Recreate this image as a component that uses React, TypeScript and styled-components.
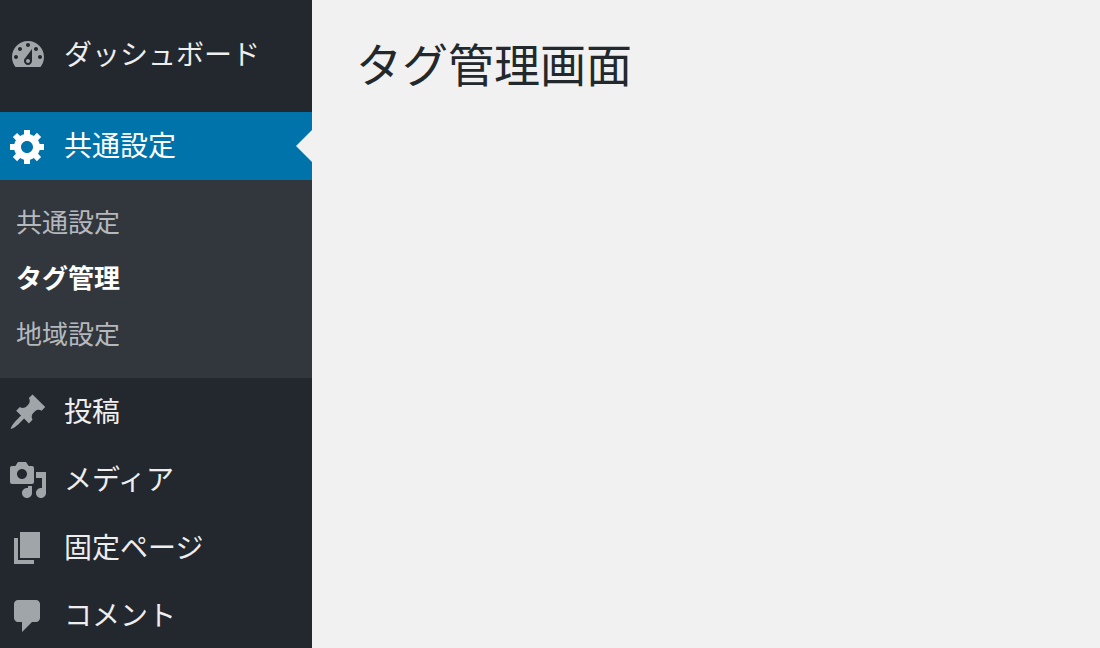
import styled, { createGlobalStyle } from "styled-components";

const GlobalStyle = createGlobalStyle`
  html, body {
    margin: 0;
    height: 100%;
    overflow: hidden;
    background: #f1f1f1;
  }
  #root {
    height: 100%;
  }
`;

const fontStack = `"Noto Sans CJK JP", "Noto Sans", sans-serif`;

const Layout = styled.div`
  display: flex;
  height: 648px;
  overflow: hidden;
  font-family: ${fontStack};
`;

const Sidebar = styled.nav`
  width: 312px;
  flex-shrink: 0;
  background: #23272e;
`;

const Menu = styled.ul`
  list-style: none;
  margin: 0;
  padding: 21px 0 0;
`;

const MenuRow = styled.li<{ $current?: boolean; $spaced?: boolean }>`
  position: relative;
  display: flex;
  align-items: center;
  gap: 16px;
  height: 68px;
  padding-left: 8px;
  margin-bottom: ${(props) => (props.$spaced ? "23px" : "0")};
  background: ${(props) => (props.$current ? "#0073aa" : "transparent")};
  color: ${(props) => (props.$current ? "#fff" : "#eee")};
  font-size: 28px;
`;

const MenuIcon = styled.svg<{ $current?: boolean }>`
  width: 40px;
  height: 40px;
  flex-shrink: 0;
  fill: ${(props) => (props.$current ? "#fff" : "#a0a5aa")};
`;

const MenuLabel = styled.span`
  line-height: 40px;
  padding-bottom: 4px;
`;

const Arrow = styled.span`
  position: absolute;
  right: 0;
  top: 18px;
  border-style: solid;
  border-width: 16px 16px 16px 0;
  border-color: transparent #f1f1f1 transparent transparent;
`;

const SubMenu = styled.ul`
  list-style: none;
  margin: 0;
  padding: 15px 0;
  background: #32363d;
`;

const SubItem = styled.li<{ $active?: boolean }>`
  height: 56px;
  padding-left: 16px;
  line-height: 52px;
  font-size: 26px;
  font-weight: ${(props) => (props.$active ? 700 : 400)};
  color: ${(props) => (props.$active ? "#fff" : "rgba(240, 245, 250, 0.7)")};
`;

const Content = styled.main`
  flex: 1;
  padding: 29px 44px 0 46px;
  background: #f1f1f1;
`;

const Title = styled.h1`
  margin: 0 0 0 -2px;
  font-size: 46px;
  font-weight: 400;
  line-height: 66px;
  color: #23282d;
`;

const icons = {
  dashboard:
    "M3.76 16h12.48c1.1-1.37 1.76-3.11 1.76-5 0-4.42-3.58-8-8-8s-8 3.58-8 8c0 1.89.66 3.63 1.76 5zM10 4c.55 0 1 .45 1 1s-.45 1-1 1-1-.45-1-1 .45-1 1-1zM6 6c.55 0 1 .45 1 1s-.45 1-1 1-1-.45-1-1 .45-1 1-1zm8 0c.55 0 1 .45 1 1s-.45 1-1 1-1-.45-1-1 .45-1 1-1zm-5.37 5.55L12 7v6c0 1.1-.9 2-2 2s-2-.9-2-2c0-.57.24-1.08.63-1.45zM4 10c.55 0 1 .45 1 1s-.45 1-1 1-1-.45-1-1 .45-1 1-1zm12 0c.55 0 1 .45 1 1s-.45 1-1 1-1-.45-1-1 .45-1 1-1zm-5 3c0-.55-.45-1-1-1s-1 .45-1 1 .45 1 1 1 1-.45 1-1z",
  settings:
    "M18 12h-2.18c-.17.7-.44 1.35-.81 1.93l1.54 1.54-2.1 2.1-1.54-1.54c-.58.36-1.23.63-1.91.79V19H8v-2.18c-.68-.16-1.33-.43-1.91-.79l-1.54 1.54-2.12-2.12 1.54-1.54c-.36-.58-.63-1.23-.79-1.91H1V9.03h2.17c.16-.7.44-1.35.8-1.94L2.43 5.55l2.1-2.1 1.54 1.54c.58-.37 1.24-.64 1.93-.81V2h3v2.18c.68.16 1.33.43 1.91.79l1.54-1.54 2.12 2.12-1.54 1.54c.36.59.64 1.24.8 1.94H18V12zm-8.5 1.5c1.66 0 3-1.34 3-3s-1.34-3-3-3-3 1.34-3 3 1.34 3 3 3z",
  post: "M10.44 3.02l1.82-1.82 6.36 6.35-1.83 1.82c-1.05-.68-2.48-.57-3.41.36l-.75.75c-.92.93-1.04 2.35-.35 3.41l-1.83 1.82-2.41-2.41-2.8 2.79c-.42.42-3.38 2.71-3.8 2.29s1.86-3.39 2.28-3.81l2.79-2.79L4.1 9.36l1.83-1.82c1.05.69 2.48.57 3.4-.36l.75-.75c.93-.92 1.05-2.35.36-3.41z",
  media:
    "M13 11V4c0-.55-.45-1-1-1h-1.67L9 1H5L3.67 3H2c-.55 0-1 .45-1 1v7c0 .55.45 1 1 1h10c.55 0 1-.45 1-1zM7 4.5c1.38 0 2.5 1.12 2.5 2.5S8.38 9.5 7 9.5 4.5 8.38 4.5 7 5.62 4.5 7 4.5zM14 6h5v10.5c0 1.38-1.12 2.5-2.5 2.5S14 17.88 14 16.5s1.12-2.5 2.5-2.5c.17 0 .34.02.5.05V9h-3V6zm-4 8.05V13h2v3.5c0 1.38-1.12 2.5-2.5 2.5S7 17.88 7 16.5 8.12 14 9.5 14c.17 0 .34.02.5.05z",
  page: "M6 15V2h10v13H6zm-1 1h8v2H3V5h2v11z",
  comments:
    "M5 2h9c1.1 0 2 .9 2 2v7c0 1.1-.9 2-2 2h-2l-5 5v-5H5c-1.1 0-2-.9-2-2V4c0-1.1.9-2 2-2z",
};

function Icon({ name, current }: { name: keyof typeof icons; current?: boolean }) {
  return (
    <MenuIcon viewBox="0 0 20 20" $current={current}>
      <path d={icons[name]} />
    </MenuIcon>
  );
}

function App() {
  return (
    <Layout>
      <GlobalStyle />
      <Sidebar>
        <Menu>
          <MenuRow $spaced>
            <Icon name="dashboard" />
            <MenuLabel>ダッシュボード</MenuLabel>
          </MenuRow>
          <MenuRow $current>
            <Icon name="settings" current />
            <MenuLabel>共通設定</MenuLabel>
            <Arrow />
          </MenuRow>
          <SubMenu>
            <SubItem>共通設定</SubItem>
            <SubItem $active>タグ管理</SubItem>
            <SubItem>地域設定</SubItem>
          </SubMenu>
          <MenuRow>
            <Icon name="post" />
            <MenuLabel>投稿</MenuLabel>
          </MenuRow>
          <MenuRow>
            <Icon name="media" />
            <MenuLabel>メディア</MenuLabel>
          </MenuRow>
          <MenuRow>
            <Icon name="page" />
            <MenuLabel>固定ページ</MenuLabel>
          </MenuRow>
          <MenuRow>
            <Icon name="comments" />
            <MenuLabel>コメント</MenuLabel>
          </MenuRow>
        </Menu>
      </Sidebar>
      <Content>
        <Title>タグ管理画面</Title>
      </Content>
    </Layout>
  );
}

export default App;
